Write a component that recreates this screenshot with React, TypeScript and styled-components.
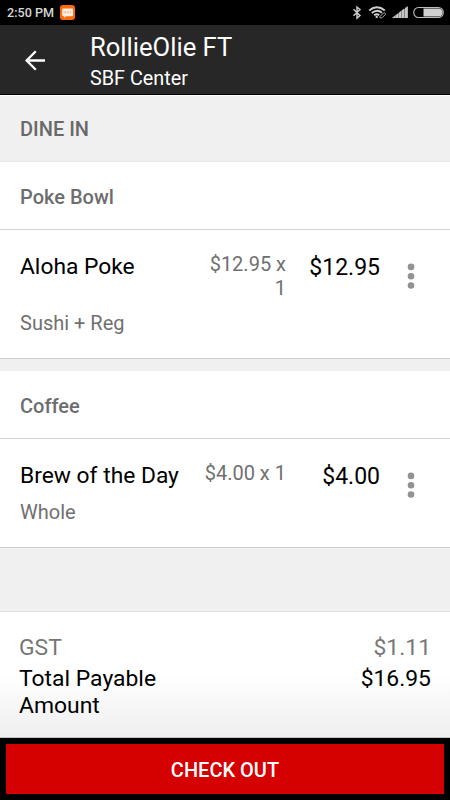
import React from "react";
import styled, { createGlobalStyle } from "styled-components";

const GlobalStyle = createGlobalStyle`
  * { box-sizing: border-box; }
  body { margin: 0; background: #000; font-family: Roboto, sans-serif; }
`;

const Screen = styled.div`
  width: 450px;
  height: 800px;
  display: flex;
  flex-direction: column;
  overflow: hidden;
  background: #f0f0f0;
  color: #000;
`;

const StatusBar = styled.div`
  height: 25px;
  flex: none;
  display: flex;
  align-items: center;
  padding: 0 6px 0 7px;
  background: #000;
`;

const Clock = styled.span`
  width: 53px;
  font-size: 12.6px;
  line-height: 25px;
  font-weight: 500;
  color: #d6d6d6;
  white-space: nowrap;
`;

const StatusIcons = styled.div`
  margin-left: auto;
  display: flex;
`;

const AppBar = styled.header`
  height: 70px;
  flex: none;
  display: flex;
  padding-left: 25px;
  background: #272727;
  border-bottom: 1px solid #000;
`;

const BackButton = styled.button`
  width: 65px;
  height: 69px;
  padding: 1px 0 0;
  border: 0;
  background: none;
  display: flex;
  align-items: center;
`;

const Titles = styled.div`
  padding-top: 7px;
  color: #fff;
`;

const Title = styled.h1`
  margin: 0;
  font-size: 25.6px;
  line-height: 31px;
  font-weight: 400;
`;

const Subtitle = styled.div`
  font-size: 19.8px;
  line-height: 32px;
`;

const ModeHeading = styled.h2`
  margin: 0;
  height: 67px;
  flex: none;
  padding: 0 20px;
  border-top: 1px solid #fff;
  border-bottom: 1px solid #e8e8e8;
  font-size: 20px;
  line-height: 67px;
  font-weight: 500;
  color: #696969;
`;

const Group = styled.section<{ $gap: number }>`
  flex: none;
  margin-bottom: ${(p) => p.$gap}px;
  background: #fff;
`;

const GroupTitle = styled.h3`
  margin: 0;
  height: 68px;
  padding-left: 20px;
  border-bottom: 1px solid #d2d2d2;
  font-size: 20px;
  line-height: 70px;
  font-weight: 500;
  color: #6d6d6d;
`;

const Item = styled.div<{ $height: number }>`
  height: ${(p) => p.$height}px;
  display: flex;
  padding: 22px 0 0 20px;
  border-bottom: 1px solid #d0d0d0;
`;

const ItemDetails = styled.div`
  width: 266px;
`;

const ItemLine = styled.div`
  display: flex;
  justify-content: space-between;
  margin-bottom: 10px;
`;

const ItemName = styled.div`
  width: 159px;
  padding-top: 1px;
  overflow: hidden;
  white-space: nowrap;
  font-size: 22.8px;
  line-height: 27px;
`;

const Quantity = styled.div`
  width: 84px;
  text-align: right;
  font-size: 20px;
  line-height: 24px;
  color: #707070;
`;

const Options = styled.div`
  padding-top: 1px;
  font-size: 20px;
  line-height: 24px;
  color: #707070;
`;

const ItemPrice = styled.div`
  width: 94px;
  padding-top: 2px;
  text-align: right;
  font-size: 23px;
  line-height: 27px;
`;

const MenuButton = styled.button`
  width: 62px;
  height: 48px;
  padding: 0;
  border: 0;
  background: none;
  display: flex;
  align-items: center;
  justify-content: center;
`;

const Totals = styled.section`
  flex: none;
  height: 127px;
  margin-top: auto;
  padding: 22px 19px 0;
  border-top: 1px solid #e0e0e0;
  border-bottom: 1px solid #c4c4c4;
  background: linear-gradient(#fff 50%, #efefef);
`;

const TotalRow = styled.div<{ $muted?: boolean }>`
  display: flex;
  justify-content: space-between;
  margin-bottom: 4px;
  font-size: 22.9px;
  line-height: 27px;
  color: ${(p) => (p.$muted ? "#777" : "#000")};
`;

const TotalLabel = styled.span`
  width: 180px;
`;

const Footer = styled.footer`
  flex: none;
  height: 62px;
  padding: 6px 6px 7px;
  background: #000;
`;

const CheckoutButton = styled.button`
  display: block;
  width: 100%;
  height: 50px;
  padding: 1px 0 0;
  border: 0;
  background: #d50000;
  color: #fff;
  font-family: inherit;
  font-size: 20px;
  font-weight: 500;
`;

const MessageIcon = () => (
  <svg width="15" height="15" viewBox="0 0 15 15">
    <rect width="15" height="15" rx="3.2" fill="#ff6a08" />
    <path d="M3.2 3.5h8.8q1 0 1 1v5.7q0 1-1 1H6l-2 1.5v-1.5h-.8q-1 0-1-1V4.5q0-1 1-1z" fill="#fff0e6" />
    <path d="M4 6v2.6M4 6.2l1.7 2.2V6M7.2 6v2.6M8.7 6v2.6M10.5 6v2.6" stroke="#ffb68a" strokeWidth=".7" fill="none" />
  </svg>
);

const SystemIcons = () => (
  <svg width="94" height="25" viewBox="350 0 94 25" fill="none">
    <path d="M353.5 9.2l6.5 6.3-3 2.6V7l3 2.5-6.5 6.3" stroke="#c8c8c8" strokeWidth="1.5" />
    <g stroke="#d0d0d0" strokeWidth="1.9">
      <path d="M369.2 10.4q7.7-6.4 15.6 0M371.8 13q5.2-4.4 10.2-.2M374.2 15.3q2.7-2.1 5 0" />
    </g>
    <circle cx="376.7" cy="16.9" r="1.2" fill="#c9c9c9" />
    <path d="M380 16.5l3.5-3.5q1.5-.6 1.9.5.2 1-.5 1.6l-2.7 2.5q-1.3.7-2.1.2-.7-.7-.1-1.3z" fill="#000" stroke="#aaa" />
    <path d="M392 18L408 6.5V18z" fill="#777" />
    <path d="M392 18l3-2.4V18zM395.5 15.2l2.5-2V18h-2.5zM398.7 12.8l2.4-2V18h-2.4zM401.8 10.3l2.4-1.7V18h-2.4zM405 8.1l2.7-1.8V18H405z" fill="#c4c4c4" />
    <rect x="413.7" y="7.5" width="29.6" height="10" rx="5" stroke="#bdbdbd" strokeWidth="1.1" />
    <path d="M423.5 8.5H439.5q3 1 3 4t-3 4H423.5z" fill="#d0d0d0" />
  </svg>
);

const BackIcon = () => (
  <svg width="21" height="21" viewBox="0 0 21 21" fill="none" stroke="#fff" strokeWidth="2.3">
    <path d="M20 10.5H2M10.8 1.2l-9.2 9.3 9.2 9.3" />
  </svg>
);

const DotsIcon = () => (
  <svg width="8" height="28" viewBox="0 0 8 28" fill="#929292">
    <circle cx="4" cy="4.9" r="3.3" />
    <circle cx="4" cy="14.2" r="3.3" />
    <circle cx="4" cy="23.5" r="3.3" />
  </svg>
);

const groups = [
  { title: "Poke Bowl", name: "Aloha Poke", quantity: "$12.95 x 1", price: "$12.95", options: "Sushi + Reg", height: 129, gap: 12 },
  { title: "Coffee", name: "Brew of the Day", quantity: "$4.00 x 1", price: "$4.00", options: "Whole", height: 109, gap: 0 },
];

export default function App() {
  return (
    <>
      <GlobalStyle />
      <Screen>
        <StatusBar>
          <Clock>2:50 PM</Clock>
          <MessageIcon />
          <StatusIcons>
            <SystemIcons />
          </StatusIcons>
        </StatusBar>
        <AppBar>
          <BackButton aria-label="Back">
            <BackIcon />
          </BackButton>
          <Titles>
            <Title>RollieOlie FT</Title>
            <Subtitle>SBF Center</Subtitle>
          </Titles>
        </AppBar>
        <ModeHeading>DINE IN</ModeHeading>
        {groups.map((g) => (
          <Group key={g.title} $gap={g.gap}>
            <GroupTitle>{g.title}</GroupTitle>
            <Item $height={g.height}>
              <ItemDetails>
                <ItemLine>
                  <ItemName>{g.name}</ItemName>
                  <Quantity>{g.quantity}</Quantity>
                </ItemLine>
                <Options>{g.options}</Options>
              </ItemDetails>
              <ItemPrice>{g.price}</ItemPrice>
              <MenuButton aria-label="Item options">
                <DotsIcon />
              </MenuButton>
            </Item>
          </Group>
        ))}
        <Totals>
          <TotalRow $muted>
            <TotalLabel>GST</TotalLabel>
            <span>$1.11</span>
          </TotalRow>
          <TotalRow>
            <TotalLabel>Total Payable Amount</TotalLabel>
            <span>$16.95</span>
          </TotalRow>
        </Totals>
        <Footer>
          <CheckoutButton>CHECK OUT</CheckoutButton>
        </Footer>
      </Screen>
    </>
  );
}
